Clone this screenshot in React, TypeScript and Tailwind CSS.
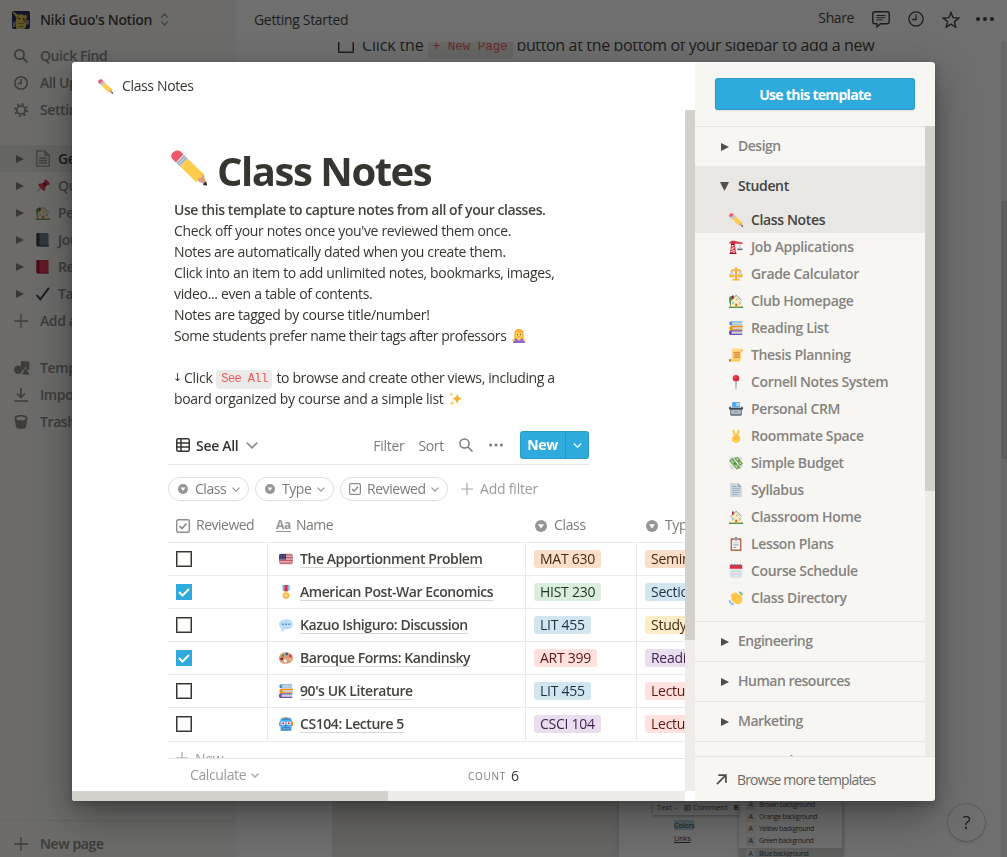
import type { ReactNode } from "react";

type IconProps = { className?: string };

function Svg({ box = 36, className = "size-[14px]", children }: { box?: number; className?: string; children: ReactNode }) {
  return (
    <svg viewBox={`0 0 ${box} ${box}`} className={`shrink-0 ${className}`}>
      {children}
    </svg>
  );
}

/* ---------- colour glyphs ---------- */

const Pencil = ({ className }: IconProps) => (
  <Svg className={className}>
    <path fill="#D99E82" d="M35.2 34.5c-.1-1.600-1.200-6.300-2.700-10.500-.6-1.600-3.600-2.500-6 .1-2.300 2.200-2.600 5.300-.7 6.500 2.800 1.600 7.600 3.600 9.400 3.900z" />
    <path fill="#EA596E" d="M1.500 9C-.3 7.200-.4 4.700 1.900 2.400S7.500-.2 9.300 1.300l3.300 3.300-7.700 7.800z" />
    <path fill="#FFCC4D" d="M32.500 24l-18-17.600-7.700 7.700 17.800 17.700c1.700-.1 3.100-.6 2.700-3.700 3 .2 3.500-1 5.200-4.100z" />
    <path fill="#292F33" d="M35.900 35.200c.3-.7-.3-2.700-.7-3.800-1.200.5-2.800 1.900-3.200 3 1.200.7 3.300 1.500 3.900.8z" />
    <path fill="#CCD6DD" d="M4.900 12.400l7.700-7.800 4.200 4.200-7.700 7.700z" />
    <path stroke="#99AAB5" strokeWidth="1.300" d="M6.300 13.700L13.900 6M8 15.400l7.700-7.700" />
  </Svg>
);

const Crane = () => (
  <Svg>
    <path fill="none" stroke="#DD2E44" strokeWidth="2.600" d="M4 34L7 8h6L17 34M6 28l9-7M7 20l7-6M5 34l10-6" />
    <path fill="#DD2E44" d="M1 6l8-5 26 6v3L12 9H1z" />
    <path fill="#A0041E" d="M2 33h17v3H2zM6 9h8v4H6z" />
    <path stroke="#99AAB5" strokeWidth="2" d="M28 9v13" />
    <path fill="#66757F" d="M21 22h14v4H21z" />
  </Svg>
);

const Scales = () => (
  <Svg>
    <path fill="#FFAC33" d="M15.500 3a2.500 2.500 0 015 0v2L32 8l-1 4-10-3v22h6v4H9v-4h6V9L5 12 4 8l11.500-3z" />
    <path fill="#9AAAB4" d="M7 9l6 13h-2L7 13 3 22H1zM29 9l6 13h-2l-4-9-4 9h-2z" />
    <path fill="#FFAC33" d="M0 20h14c0 5-3 7-7 7s-7-2-7-7zM22 20h14c0 5-3 7-7 7s-7-2-7-7z" />
  </Svg>
);

const House = ({ tree = true, className }: IconProps & { tree?: boolean }) => (
  <Svg className={className}>
    {tree && <path fill="#5C913B" d="M0 12C0 6 5 3 9 6c4 3 5 9 3 14l-4 12H4L1 22z" />}
    <path fill="#5C913B" d="M0 32h36v4H0z" />
    <path fill="#FFE8B6" d="M7 16l6-6 7-7 11 12v17H5V17z" />
    <path fill="#A0041E" d="M8 4h4v8H8z" />
    <path fill="none" stroke="#66757F" strokeWidth="2" d="M4 17L19 3l14 14" />
    <path fill="#C1694F" d="M16 25h5v7h-5z" />
    <path fill="#77BBEE" d="M8 20h4v5H8zM26 20h4v5h-4zM18 12h4v4h-4z" />
  </Svg>
);

const Books = () => (
  <Svg>
    <path fill="#3B88C3" d="M4 1h30v3H8v5h26v2H5C2 11 1 9 1 6s1-5 3-5z" />
    <path fill="#BFD3E0" d="M7 4h26v5H7zM8 16h27v5H8zM6 27h28v6H6z" />
    <path fill="#F4900C" d="M6 12h30v4H9v5h26v3H6c-3 0-5-3-5-6s2-6 5-6z" />
    <path fill="#744EAA" d="M4 24h30v3H7v6h27v3H4c-3 0-4-3-4-6s1-6 4-6z" />
  </Svg>
);

const Scroll = () => (
  <Svg>
    <path fill="#FFD983" d="M9 1h23c3 0 4 2 4 4s-2 4-4 4v21H7V5c0-2 0-4 2-4z" />
    <path fill="#FFCC4D" d="M3 29h25c-1 4 2 5 3 6H5c-3 0-5-1-5-3s1-3 3-3z" />
    <path fill="#C1694F" d="M12 11h16v2H12zM12 15h16v2H12zM12 19h16v2H12zM12 23h16v2H12zM1 29h4v6H3c-4 0-4-5-2-6z" />
    <path fill="#E39F3D" d="M28 5h8c0 3-2 4-4 4s-4-1-4-4zM12 9h16v16H12z" opacity=".5" />
  </Svg>
);

const Pin = () => (
  <Svg>
    <path fill="#99AAB5" d="M16 16h4l-.7 19a1.300 1.300 0 01-2.600 0z" />
    <circle cx="18" cy="8.500" r="8.500" fill="#DD2E44" />
    <circle cx="15" cy="5.500" r="2.200" fill="#EA596E" />
  </Svg>
);

const CardIndex = () => (
  <Svg>
    <path fill="#55ACEE" d="M8 0h20v14H8z" />
    <path fill="#BBDDF5" d="M19 2h7v8h-7z" />
    <path fill="#66757F" d="M0 13l5-2v5h26v-5l5 2v6l-3 2v13H3V21l-3-2z" />
    <path fill="#B4C1CA" d="M6 21h24v11H6z" />
    <path fill="#3A444B" d="M1 15h34v3H1zM5 33h26v2H5z" />
    <path fill="#8899A6" d="M13 24h10v4H13z" />
  </Svg>
);

const Victory = () => (
  <Svg>
    <path fill="#FFCB4C" d="M10 3c2-1 4 0 5 3l3 10 4-12c1-3 6-2 5.500 1L25 18c4 2 5 5 4 9-1 6-5 9-11 9S7 32 7 26c0-4 2-7 6-7L9 7c0-2 0-3 1-4z" />
    <path fill="none" stroke="#EF9645" strokeWidth="1.600" d="M10 22c3-2 7-2 8 1s-3 4-6 4M18 18l5 1c3 1 3 5 0 6" />
  </Svg>
);

const Money = () => (
  <Svg>
    <path fill="#CCD6DD" d="M0 8L10 1l14 6-6 7zM20 27l8-8 8 7-8 8z" />
    <path fill="#CCD6DD" d="M23 3l11 1v9l-8-4zM2 24l3 10 8-1-6-9z" />
    <path fill="#5C913B" d="M0 12l9-6 20 24-9 5zM14 5l8-3 14 18-8 5z" />
    <path fill="#A7D28B" d="M3 13l5-4 17 20-5 3zM17 6l4-2 12 15-5 3z" />
    <path fill="#3E721D" d="M11 17l5 1 1 6-4-2zM23 10l4 2 1 5-4-3z" />
  </Svg>
);

const Page = () => (
  <Svg>
    <path fill="#CCD6DD" d="M3 2c0-1 1-2 2-2h18l10 10v24c0 1-1 2-2 2H5c-1 0-2-1-2-2z" />
    <path fill="#99AAB5" d="M23 0l10 10H23zM8 8h11v2H8zM8 13h20v2H8zM8 18h20v2H8zM8 23h20v2H8zM8 28h14v2H8z" />
  </Svg>
);

const Clipboard = () => (
  <Svg>
    <rect x="4" y="3" width="28" height="33" rx="2" fill="#C1694F" />
    <path fill="#fff" d="M8 8h20v24H8z" />
    <path fill="#AAB8C2" d="M12 4h12v6H12z" />
    <path fill="#66757F" d="M16 0h4v5h-4z" />
    <path fill="#99AAB5" d="M11 14h14v2H11zM11 18h14v2H11zM11 22h14v2H11zM11 26h8v2h-8z" />
  </Svg>
);

const Calendar = () => (
  <Svg>
    <path fill="#E1E8ED" d="M2 8h32v25a3 3 0 01-3 3H5a3 3 0 01-3-3z" />
    <path fill="#DD2E44" d="M2 4a2 2 0 012-2h28a2 2 0 012 2v8H2z" />
    <path fill="#66757F" d="M6 0h3v5H6zM13 0h3v5h-3zM20 0h3v5h-3zM27 0h3v5h-3z" />
    <path stroke="#B8C5CE" strokeWidth="1" d="M2 19h32M2 26h32M10 12v24M18 12v24M26 12v24" />
  </Svg>
);

const Wave = () => (
  <Svg>
    <path fill="#FFCB4C" d="M6 10c0-4 4-5 7-3l1-3c2-2 5-1 6 1l5 5 2-5c2-3 5-1 5 2l2 13c2 8-3 14-10 14-6 0-12-3-17-10-2-3-2-5 1-6l-3-4c-1-2 0-4 1-4z" />
    <path fill="none" stroke="#EF9645" strokeWidth="1.100" d="M9 11l8 9M8 18l6 7M17 9l6 9" />
    <path fill="none" stroke="#5DADEC" strokeWidth="3.500" d="M25 3c4-1 9 3 9 8M2 24c-1 5 4 10 10 10" />
  </Svg>
);

const Flag = () => (
  <Svg>
    <rect x="0" y="5" width="36" height="26" rx="4" fill="#EEE" />
    <path stroke="#B22334" strokeWidth="2" d="M2 6h32M0 10h36M0 14h36M0 18h36M0 22h36M0 26h36M2 30h32" />
    <path fill="#3C3B6E" d="M4 5h14v14H0V9a4 4 0 014-4z" />
    <path stroke="#aab" strokeDasharray="1.500 2.500" d="M2 9h15M2 13h15M2 17h15" />
  </Svg>
);

const Medal = () => (
  <Svg>
    <path fill="#55ACEE" d="M9 0h18v13l-9 6-9-6z" />
    <path fill="#BBDDF5" d="M12 0h2v15h-2zM22 0h2v15h-2z" />
    <path fill="#DD2E44" d="M14 0h8v16l-4 3-4-3z" />
    <circle cx="18" cy="27" r="8.500" fill="#FFAC33" />
    <circle cx="18" cy="27" r="5" fill="#FFD983" />
    <path fill="#FFD983" d="M14 16h8v4h-8z" />
  </Svg>
);

const Bubble = () => (
  <Svg>
    <path fill="#BBDDF5" d="M18 3C8 3 0 8.500 0 16c0 4.500 3 8 7 10.500.5 3-1 6-3 8.500 5 0 9-2 11-6.200C27 30 36 24.500 36 16 36 8.500 28 3 18 3z" />
    <path fill="#3B88C3" d="M8 14h4v4H8zM16 14h4v4h-4zM24 14h4v4h-4z" />
  </Svg>
);

const Palette = () => (
  <Svg>
    <path fill="#D99E82" d="M18 3C8 3 0 9 0 18s6 15 16 15 20-5 20-15C36 9 28 3 18 3z" />
    <circle cx="10" cy="12" r="3.500" fill="#5C913B" />
    <circle cx="20" cy="8" r="3.500" fill="#226699" />
    <circle cx="29" cy="13" r="3.500" fill="#DD2E44" />
    <circle cx="7" cy="20" r="3.500" fill="#A0041E" />
    <circle cx="29" cy="22" r="3" fill="#FFCC4D" />
    <circle cx="16" cy="25" r="4" fill="#fff" />
  </Svg>
);

const Robot = () => (
  <Svg>
    <path fill="#F4900C" d="M0 12h4v12H0zM32 12h4v12h-4zM14 0h8v4h-8z" />
    <path fill="#55ACEE" d="M10 2h16c5 0 7 4 7 8v14l-1 4v8H4v-8l-1-4V10c0-4 2-8 7-8z" />
    <path fill="#3B88C3" d="M9 4h18v4H9z" />
    <path fill="#fff" d="M6 12h10v8H6zM20 12h10v8H20z" />
    <circle cx="11" cy="16" r="2.800" fill="#DD2E44" />
    <circle cx="25" cy="16" r="2.800" fill="#DD2E44" />
    <path fill="#226699" d="M15 21h6v3h-6zM8 27h20v5H8z" />
    <path fill="#CCD6DD" d="M11 28h3v3h-3zM16.500 28h3v3h-3zM22 28h3v3h-3z" />
  </Svg>
);

const Woman = () => (
  <Svg className="size-[14px]">
    <path fill="#FFAC33" d="M18 0c8 0 12 5 12 12v14H6V12C6 5 10 0 18 0z" />
    <path fill="#9266CC" d="M3 36v-5c0-4 3-6 7-6h16c4 0 7 2 7 6v5z" />
    <path fill="#FFDC5D" d="M14 20h8v7l-4 3-4-3zM0 27h7v4H0zM29 27h7v4h-7z" />
    <ellipse cx="18" cy="14" rx="8.500" ry="9.500" fill="#FFDC5D" />
    <path fill="#FFAC33" d="M9 13c0-7 5-8 9-8s9 2 9 8c-3-3-9-1-12-5-1 3-4 3-6 5z" />
    <path fill="#662113" d="M13 13h2v3h-2zM21 13h2v3h-2z" />
    <path stroke="#C1694F" strokeWidth="1.500" d="M15 20h6" />
  </Svg>
);

const Sparkles = () => (
  <Svg className="size-[14px]">
    <path fill="#FFAC33" d="M21 3c2 10 5 12 15 14-10 2-13 5-15 15-2-10-5-13-15-15C16 15 19 13 21 3z" />
    <path fill="#FFCC4D" d="M6 0c1 4 2 5 6 6-4 1-5 2-6 6-1-4-2-5-6-6 4-1 5-2 6-6zM8 22c1 4.500 2 5.500 7 7-5 1-6 2-7 7-1-5-2-6-7-7 5-1.500 6-2.500 7-7z" />
  </Svg>
);

const Pushpin = () => (
  <Svg>
    <path stroke="#99AAB5" strokeWidth="2.500" d="M2 34l12-13" />
    <path fill="#DD2E44" d="M22 1c3-2 16 10 13 13-1 2-4 2-6 1l-5 6c1 5 0 8-2 10C19 32 5 18 6 14c1-2 5-3 10-2l6-5c-1-2-1-5 0-6z" />
    <path fill="#A0041E" d="M22 7l7 7-5 6-8-8z" />
  </Svg>
);

const Book = ({ color, spine }: { color: string; spine: string }) => (
  <Svg>
    <path fill="#CCD6DD" d="M6 2h28v32H6z" />
    <rect x="2" y="0" width="30" height="34" rx="3" fill={color} />
    <path fill={spine} d="M4 0h5v34H4a3 3 0 01-3-3V3a3 3 0 013-3zM2 32h31v3H4z" />
  </Svg>
);

const CheckGlyph = () => (
  <Svg>
    <path fill="none" stroke="#31373D" strokeWidth="5" strokeLinecap="round" strokeLinejoin="round" d="M3 22l8 10L32 4" />
  </Svg>
);

const PikachuAvatar = () => (
  <Svg className="size-[18px] rounded-[2px]">
    <path fill="#1a1a50" d="M0 0h36v36H0z" />
    <path fill="#d9bd48" d="M3 0l10 8c4-2 8-2 11 1l9-3-5 10c2 7 1 14-3 20H9C6 28 6 21 9 14L2 3z" />
    <path fill="#101018" d="M2 0h6l2 6zM35 4l-6 8 0-5zM13 14h3v3h-3zM22 14h3v3h-3z" />
    <circle cx="25" cy="20" r="2.600" fill="#d04030" />
    <path fill="#8a7430" d="M12 24h12v2H12zM14 30h9v2h-9zM8 12l4-2v5z" />
    <path fill="#8f8f88" d="M29 18h5v9h-5zM2 22h4v10H2z" />
  </Svg>
);

/* ---------- line icons ---------- */

const Caret = ({ className = "" }: IconProps) => (
  <svg viewBox="0 0 10 6" className={`shrink-0 ${className}`} fill="none" stroke="currentColor" strokeWidth="1.400">
    <path d="M.6.6L5 5 9.400.6" />
  </svg>
);

const Plus = ({ className = "" }: IconProps) => (
  <svg viewBox="0 0 14 14" className={`shrink-0 ${className}`} stroke="currentColor" strokeWidth="1.300">
    <path d="M7 0v14M0 7h14" />
  </svg>
);

const Search = ({ className = "" }: IconProps) => (
  <svg viewBox="0 0 14 14" className={`shrink-0 ${className}`} fill="none" stroke="currentColor">
    <circle cx="5.500" cy="5.500" r="4.600" />
    <path d="M9 9l4.500 4.500" />
  </svg>
);

const Clock = ({ className = "" }: IconProps) => (
  <svg viewBox="0 0 16 16" className={`shrink-0 ${className}`} fill="none" stroke="currentColor">
    <circle cx="8" cy="8" r="7.100" />
    <path d="M8 3.500v5H4.200" />
  </svg>
);

const Dots = ({ className = "" }: IconProps) => (
  <svg viewBox="0 0 18 4" className={`shrink-0 ${className}`} fill="currentColor">
    <circle cx="2" cy="2" r="2" />
    <circle cx="9" cy="2" r="2" />
    <circle cx="16" cy="2" r="2" />
  </svg>
);

const Triangle = ({ className = "" }: IconProps) => (
  <svg viewBox="0 0 8 8" className={`shrink-0 ${className}`} fill="currentColor">
    <path d="M0 0L8 4 0 8z" />
  </svg>
);

const SelectIcon = ({ className = "" }: IconProps) => (
  <svg viewBox="0 0 12 12" className={`shrink-0 ${className}`}>
    <circle cx="6" cy="6" r="6" fill="#979592" />
    <path d="M3 4.300h6L6 8.400z" fill="#fff" />
  </svg>
);

const CheckIcon = ({ className = "" }: IconProps) => (
  <svg viewBox="0 0 14 14" className={`shrink-0 ${className}`} fill="none" stroke="#8f8d8a">
    <rect x=".7" y=".7" width="12.600" height="12.600" rx="1.500" strokeWidth="1.400" />
    <path d="M3.500 7.200l2.500 2.300 4.500-5" strokeWidth="1.800" />
  </svg>
);

/* ---------- page behind the dialog ---------- */

function NavRow({ icon, label }: { icon: ReactNode; label: string }) {
  return (
    <div className="flex h-[27px] items-center pl-[14px]">
      <span className="flex w-[26px]">{icon}</span>
      <span className="pb-px">{label}</span>
    </div>
  );
}

function PageRow({ icon, label, active = false }: { icon: ReactNode; label: string; active?: boolean }) {
  return (
    <div className={`flex h-[27px] items-center pl-4 ${active ? "bg-[#e6e5e2] text-[#37352f]" : ""}`}>
      <Triangle className="mr-[12px] size-[8px] text-[#787774]" />
      <span className="flex w-[22px]">{icon}</span>
      <span className="pb-px">{label}</span>
    </div>
  );
}

function Sidebar() {
  return (
    <aside className="flex w-[236px] shrink-0 flex-col bg-[#f7f6f3] text-[14px] font-semibold tracking-[-0.4px] text-[#82817d]">
      <div className="flex h-[39px] items-center pl-3 text-[#37352f]">
        <PikachuAvatar />
        <span className="ml-[10px] font-semibold tracking-[-0.370px]">Niki Guo's Notion</span>
        <svg viewBox="0 0 8 13" className="ml-[8px] h-[13px] w-[9px]" fill="none" stroke="#8b8a86" strokeWidth="1.300">
          <path d="M.6 4.600L4 1l3.400 3.600M.6 8.400L4 12l3.400-3.600" />
        </svg>
      </div>
      <div className="mt-[3px]">
        <NavRow icon={<Search className="size-[14px] stroke-[1.800]" />} label="Quick Find" />
        <NavRow icon={<Clock className="size-[14px] stroke-[1.800]" />} label="All Updates" />
        <NavRow
          icon={
            <svg viewBox="0 0 14 14" className="size-[14px]" fill="none" stroke="currentColor">
              <circle cx="7" cy="7" r="4.200" strokeWidth="1.800" />
              <circle cx="7" cy="7" r="6" strokeWidth="2" strokeDasharray="2 2.710" />
            </svg>
          }
          label="Settings & Members"
        />
      </div>
      <div className="mt-[22px]">
        <PageRow
          active
          icon={
            <svg viewBox="0 0 14 17" className="-my-1 h-[17px] w-[14px]" fill="none" stroke="#8b8a86" strokeWidth="1.300">
              <path d="M.8.8h8l4.400 4.400v11H.800zM8.800.8v4.400h4.400M3 8h8M3 10.500h8M3 13h8" />
            </svg>
          }
          label="Getting Started"
        />
        <PageRow icon={<Pushpin />} label="Quick Note" />
        <PageRow icon={<House />} label="Personal Home" />
        <PageRow icon={<Book color="#66757F" spine="#292F33" />} label="Journal" />
        <PageRow icon={<Book color="#DD2E44" spine="#A0041E" />} label="Reading List" />
        <PageRow icon={<CheckGlyph />} label="Task List" />
        <NavRow icon={<Plus className="size-[14px]" />} label="Add a page" />
      </div>
      <div className="mt-[20px]">
        <NavRow
          icon={
            <svg viewBox="0 0 16 14" className="h-[14px] w-[16px]" fill="currentColor">
              <circle cx="4.200" cy="8.800" r="4.200" />
              <path d="M7 0l8.500.500-.5 9-8.500-1z" />
              <path d="M11.500 6l4.500 8H7.500z" stroke="#f7f6f3" strokeWidth=".7" />
            </svg>
          }
          label="Templates"
        />
        <NavRow
          icon={
            <svg viewBox="0 0 14 14" className="size-[14px]" fill="none" stroke="currentColor" strokeWidth="1.700">
              <path d="M7 0v9M3 5.500L7 9.500l4-4M0 13h14" />
            </svg>
          }
          label="Import"
        />
        <NavRow
          icon={
            <svg viewBox="0 0 14 14" className="size-[14px]" fill="currentColor">
              <path d="M.5 3C.5 1 3 0 7 0s6.500 1 6.500 3L12 12c-.3 1.300-2 2-5 2s-4.700-.7-5-2z" />
              <ellipse cx="7" cy="3.400" rx="4.600" ry="1.900" fill="#f7f6f3" />
            </svg>
          }
          label="Trash"
        />
      </div>
      <div className="mt-auto flex h-[37px] items-center border-t border-[#e6e5e2] pt-[10px]">
        <NavRow icon={<Plus className="size-[14px]" />} label="New page" />
      </div>
    </aside>
  );
}

const swatches = [
  { name: "Brown", tone: "bg-[#e9e5e3]" },
  { name: "Orange", tone: "bg-[#faebdd]" },
  { name: "Yellow", tone: "bg-[#fbf3db]" },
  { name: "Green", tone: "bg-[#ddedea]" },
  { name: "Blue", tone: "bg-[#ddebf1]" },
];

function BackgroundDoc() {
  return (
    <main className="flex min-w-0 flex-1 flex-col bg-white text-[#37352f]">
      <header className="flex h-[42px] shrink-0 items-center pl-[18px] pr-[13px] text-[14px]">
        <span className="-mt-1 tracking-[-0.32px]">Getting Started</span>
        <div className="-mt-1 ml-auto flex items-center">
          <span className="-mt-[3px] mr-[18px] tracking-[-0.4px]">Share</span>
          <svg viewBox="0 0 18 17" className="mr-[18px] h-[17px] w-[18px]" fill="none" stroke="currentColor" strokeWidth="1.400">
            <path d="M3 .8h12c1.500 0 2.200.7 2.200 2.200v7.500c0 1.500-.7 2.200-2.200 2.200H8.500L5 16v-3.300H3C1.500 12.700.8 12 .8 10.500V3C.8 1.500 1.500.8 3 .8z" />
            <path strokeWidth="1" d="M4.500 4.500h9M4.500 6.700h9M4.500 8.900h6" />
          </svg>
          <Clock className="mr-[18px] size-[16px] stroke-[1.300]" />
          <svg viewBox="0 0 18 17" className="mr-[16px] h-[17px] w-[18px]" fill="none" stroke="currentColor" strokeWidth="1.400">
            <path d="M9 1.500l2.100 5.200 5.600.4-4.300 3.600 1.400 5.500L9 13.200l-4.800 3 1.400-5.500L1.300 7.100l5.600-.4z" />
          </svg>
          <Dots className="h-[4px] w-[18px]" />
        </div>
      </header>
      <div className="flex min-h-0 flex-1 overflow-hidden">
        <div className="flex min-w-0 flex-1 flex-col overflow-hidden">
          <div className="-mt-[9px] flex h-[24px] shrink-0 items-center pl-[102px] text-[16px]">
            <span className="mr-[8px] size-[16px] border border-[#37352f] shadow-[inset_0_0_0_1px_rgba(55,53,47,0.500)]" />
            <span className="whitespace-pre tracking-[-0.14px]">Click the </span>
            <span className="mt-[4px] flex h-[24px] items-center whitespace-pre rounded-[3px] bg-[#ebeae8] px-[5px] font-['Liberation_Mono'] text-[12.500px] text-[#eb5757]">
              + New Page
            </span>
            <span className="whitespace-pre tracking-[-0.350px]"> button at the bottom of your sidebar to add a new</span>
          </div>
          <div className="ml-[96px] mt-auto flex h-[56px] w-[510px] shrink-0 bg-[#e9e7e2] text-[7.500px] font-medium">
            <div className="ml-[287px] flex h-full w-[223px] bg-white shadow-[0_0_6px_rgba(0,0,0,0.200)]">
              <div className="flex w-[120px] flex-col">
                <div className="ml-[34px] flex h-[14px] w-[86px] shrink-0 items-center gap-[6px] whitespace-nowrap bg-white pl-[4px] shadow-[0_1px_3px_rgba(0,0,0,0.400)]">
                  <span>Text</span>
                  <Caret className="-ml-[4px] h-[3px] w-[4px]" />
                  <span className="flex items-center gap-[2px]">
                    <svg viewBox="0 0 18 17" className="size-[7px]" fill="none" stroke="currentColor" strokeWidth="2">
                      <path d="M2 1h14v11H9l-4 4v-4H2zM5 5h8M5 8h6" />
                    </svg>
                    Comment
                  </span>
                  <span className="font-bold">B</span>
                </div>
                <span className="ml-[55px] mt-[5px] w-fit bg-[#b5d5e5] leading-[10px] tracking-[-0.3px]">Colors</span>
                <span className="ml-[55px] mt-[4px] w-fit leading-[9px] tracking-[-0.3px] underline">Links</span>
              </div>
              <div className="flex flex-1 flex-col shadow-[0_0_4px_rgba(0,0,0,0.300)]">
                {swatches.map((s) => (
                  <div key={s.name} className={`flex h-[12.200px] shrink-0 items-center whitespace-nowrap pl-[7px] text-[7px] tracking-[-0.400px] ${s.name === "Brown" ? "-mt-[2px]" : ""} ${s.name === "Blue" ? "bg-[#d5d4d2]" : ""}`}>
                    <span className={`mr-[4px] flex size-[9px] items-center justify-center ${s.tone}`}>A</span>
                    <span>{s.name} background</span>
                  </div>
                ))}
              </div>
            </div>
          </div>
        </div>
        <div className="w-[6px] bg-[#edece9] pt-[159px]">
          <div className="h-[258px] bg-[#d3d1cb]" />
        </div>
      </div>
    </main>
  );
}

/* ---------- dialog ---------- */

const rows = [
  { done: false, icon: <Flag />, name: "The Apportionment Problem", cls: "MAT 630", ct: "bg-[#fadec9] text-[#49290e]", type: "Seminar", tt: "bg-[#fadec9] text-[#49290e]" },
  { done: true, icon: <Medal />, name: "American Post-War Economics", cls: "HIST 230", ct: "bg-[#dbeddb] text-[#1c3829]", type: "Section", tt: "bg-[#d3e5ef] text-[#183347]" },
  { done: false, icon: <Bubble />, name: "Kazuo Ishiguro: Discussion", cls: "LIT 455", ct: "bg-[#d3e5ef] text-[#183347]", type: "Study Group", tt: "bg-[#fdecc8] text-[#402c1b]" },
  { done: true, icon: <Palette />, name: "Baroque Forms: Kandinsky", cls: "ART 399", ct: "bg-[#ffe2dd] text-[#5d1715]", type: "Reading", tt: "bg-[#e8deee] text-[#412454]" },
  { done: false, icon: <Books />, name: "90's UK Literature", cls: "LIT 455", ct: "bg-[#d3e5ef] text-[#183347]", type: "Lecture", tt: "bg-[#ffe2dd] text-[#5d1715]" },
  { done: false, icon: <Robot />, name: "CS104: Lecture 5", cls: "CSCI 104", ct: "bg-[#e8deee] text-[#412454]", type: "Lecture", tt: "bg-[#ffe2dd] text-[#5d1715]" },
];

function Tag({ tone, children }: { tone: string; children: ReactNode }) {
  return <span className={`flex h-[18px] items-center whitespace-nowrap rounded-[3px] px-[6px] pb-[2px] text-[14px] tracking-[-0.27px] ${tone}`}>{children}</span>;
}

function Chip({ icon, label, className }: { icon: ReactNode; label: string; className: string }) {
  return (
    <div className={`flex h-[24px] shrink-0 items-center rounded-full border border-[#deddda] text-[14px] tracking-[-0.45px] text-[#7d7b77] ${className}`}>
      {icon}
      <span className="pb-px">{label}</span>
      <Caret className="ml-auto h-[5px] w-[8px] text-[#979592]" />
    </div>
  );
}

function NotesTable() {
  return (
    <div className="ml-[96px] mt-[8px] flex w-[600px] flex-col text-[14px]">
      <div className="flex h-[34px] shrink-0 items-center border-b border-[#e9e9e7] tracking-[-0.5px] text-[#7d7b77]">
        <div className="flex w-[100px] items-center pl-2">
          <CheckIcon className="mr-[6px] size-[14px]" />
          <span className="pb-[2px]">Reviewed</span>
        </div>
        <div className="flex w-[258px] items-center pl-2">
          <span className="mr-[5px] border-b border-[#979592] text-[12px] font-bold leading-[12px] tracking-[-0.3px] text-[#979592]">Aa</span>
          <span className="pb-[2px]">Name</span>
        </div>
        <div className="flex w-[111px] items-center pl-[9px] tracking-[-0.35px]">
          <SelectIcon className="mr-[7px] size-[12px]" />
          <span className="pb-[2px]">Class</span>
        </div>
        <div className="flex items-center pl-[9px] tracking-[-0.35px]">
          <SelectIcon className="mr-[7px] size-[12px]" />
          <span className="pb-[2px]">Type</span>
        </div>
      </div>
      {rows.map((r, i) => (
        <div key={r.name} className={`flex shrink-0 border-b border-[#e9e9e7] ${i === 5 ? "h-[34px] pb-px" : "h-[33px]"}`}>
          <div className="flex w-[100px] items-center border-r border-[#e9e9e7] pl-2">
            {r.done ? (
              <span className="flex size-4 items-center justify-center bg-[#2eaadc]">
                <svg viewBox="0 0 12 9" className="h-[9px] w-[12px]" fill="none" stroke="#fff" strokeWidth="2">
                  <path d="M1 4l3.500 3.500L11 1" />
                </svg>
              </span>
            ) : (
              <span className="size-4 border border-[#37352f] shadow-[inset_0_0_0_1px_rgba(55,53,47,0.500)]" />
            )}
          </div>
          <div className="flex w-[258px] items-center border-r border-[#e9e9e7] pl-[11px]">
            {r.icon}
            <span className="ml-[7px] whitespace-nowrap border-b border-[#d9d8d5] font-semibold leading-[17px] tracking-[-0.440px] text-[#45433e]">{r.name}</span>
          </div>
          <div className="flex w-[111px] items-center border-r border-[#e9e9e7] pl-2">
            <Tag tone={r.ct}>{r.cls}</Tag>
          </div>
          <div className="flex items-center pl-2">
            <Tag tone={r.tt}>{r.type}</Tag>
          </div>
        </div>
      ))}
      <div className="flex h-[32px] shrink-0 items-center pl-2 tracking-[-0.3px] text-[#9b9a97]">
        <Plus className="mr-[7px] size-[12px]" />
        New
      </div>
    </div>
  );
}

function Preview() {
  return (
    <section className="flex w-[623px] shrink-0 flex-col bg-white text-[#37352f]">
      <div className="flex h-[48px] shrink-0 items-center pl-[26px] text-[14px]">
        <Pencil className="size-[15px]" />
        <span className="ml-[9px] pb-px tracking-[-0.360px]">Class Notes</span>
      </div>
      <div className="flex h-[681px] shrink-0">
        <div className="flex w-[613px] flex-col overflow-hidden">
          <div className="flex h-[648px] shrink-0 flex-col overflow-hidden">
            <div className="mt-[37px] flex h-[48px] shrink-0 items-center pl-[99px]">
              <Pencil className="-mt-[6px] size-[36px]" />
              <h1 className="ml-[10px] whitespace-nowrap pb-px text-[40px] font-bold leading-[48px] tracking-[-1.450px]">Class Notes</h1>
            </div>
            <div className="mt-[4px] flex shrink-0 flex-col whitespace-nowrap pl-[102px] text-[14px] leading-[21px] tracking-[-0.345px]">
              <p className="font-semibold tracking-[-0.430px] text-[#45433e]">Use this template to capture notes from all of your classes.</p>
              <p>Check off your notes once you've reviewed them once.</p>
              <p className="tracking-[-0.350px]">Notes are automatically dated when you create them.</p>
              <p>Click into an item to add unlimited notes, bookmarks, images,</p>
              <p>video... even a table of contents.</p>
              <p className="tracking-[-0.310px]">Notes are tagged by course title/number!</p>
              <p className="flex items-center tracking-[-0.430px]">
                Some students prefer name their tags after professors <span className="ml-[6px]"><Woman /></span>
              </p>
              <p className="mt-[21px] flex h-[21px] items-center tracking-[-0.300px]">
                <span className="-ml-px w-[9px] font-['DejaVu_Sans'] text-[11px]">↓</span>
                <span className="ml-[2px]">Click</span>
                <span className="ml-[4px] mr-[4px] mt-[3px] flex h-[19px] w-[56px] items-center justify-center rounded-[3px] bg-[#ebebea] font-['Liberation_Mono'] text-[12px] tracking-[-0.600px] text-[#eb5757]">See All</span>
                <span className="tracking-[-0.370px]">to browse and create other views, including a</span>
              </p>
              <p className="flex items-center tracking-[-0.320px]">
                board organized by course and a simple list <span className="ml-[5px]"><Sparkles /></span>
              </p>
            </div>
            <div className="ml-[96px] mt-[22px] flex h-[34px] w-[421px] shrink-0 items-center border-b border-[#e6e6e4] pb-[5px] pl-2 text-[14px]">
              <svg viewBox="0 0 14 14" className="size-[14px]" fill="none" stroke="currentColor" strokeWidth="1.500">
                <rect x=".75" y=".75" width="12.500" height="12.500" rx="1.500" />
                <path d="M.8 5h12.400M.8 9h12.400M5 .8v12.400" />
              </svg>
              <span className="ml-[6px] font-semibold tracking-[-0.300px]">See All</span>
              <Caret className="ml-[8px] h-[7px] w-[12px] text-[#8b8a86]" />
              <div className="ml-auto flex items-center text-[#7d7b77]">
                <span className="tracking-[-0.300px]">Filter</span>
                <span className="ml-[14px] tracking-[-0.300px]">Sort</span>
                <Search className="ml-[15px] size-[14px] stroke-[1.500]" />
                <Dots className="ml-[16px] mr-[17px] h-[4px] w-[14px]" />
                <div className="flex h-[28px] w-[69px] overflow-hidden rounded-[3px] bg-[#2eaadc] font-bold text-white shadow-[inset_0_0_0_1px_rgba(15,15,15,0.100)]">
                  <span className="flex w-[45px] items-center justify-center pb-px tracking-[-0.400px]">New</span>
                  <span className="flex flex-1 items-center justify-center border-l border-[#2794c0]">
                    <Caret className="h-[5px] w-[9px]" />
                  </span>
                </div>
              </div>
            </div>
            <div className="ml-[96px] mt-[12px] flex shrink-0 items-center">
              <Chip className="w-[81px] pl-[9px] pr-[8px]" icon={<SelectIcon className="mr-[7px] size-[10px]" />} label="Class" />
              <Chip className="ml-[6px] w-[79px] pl-[9px] pr-[8px]" icon={<SelectIcon className="mr-[7px] size-[10px]" />} label="Type" />
              <Chip className="ml-[6px] w-[108px] pl-[8px] pr-[8px]" icon={<CheckIcon className="mr-[6px] size-[12px]" />} label="Reviewed" />
              <Plus className="ml-[13px] size-[12px] text-[#a5a4a1]" />
              <span className="ml-[7px] pb-px text-[14px] tracking-[-0.200px] text-[#9b9a97]">Add filter</span>
            </div>
            <NotesTable />
          </div>
          <div className="ml-[96px] flex h-[33px] shrink-0 items-center border-t border-[#e6e6e4] pl-[22px] text-[14px] text-[#9b9a97]">
            <span className="pb-px tracking-[-0.380px]">Calculate</span>
            <Caret className="ml-[5px] h-[5px] w-[8px] stroke-2 text-[#b5b4b1]" />
            <span className="ml-auto mr-[5px] mt-[2px] text-[10px] tracking-[0.700px] text-[#7d7b77]">COUNT</span>
            <span className="mr-[166px] text-[#37352f]">6</span>
          </div>
        </div>
        <div className="w-[10px] bg-[#edece9]">
          <div className="h-[530px] bg-[#d3d1cb]" />
        </div>
      </div>
      <div className="h-[10px] w-[613px] bg-[#edece9]">
        <div className="h-full w-[316px] bg-[#d3d1cb]" />
      </div>
    </section>
  );
}

const templates = [
  { icon: <Crane />, name: "Job Applications" },
  { icon: <Scales />, name: "Grade Calculator" },
  { icon: <House />, name: "Club Homepage" },
  { icon: <Books />, name: "Reading List" },
  { icon: <Scroll />, name: "Thesis Planning" },
  { icon: <Pin />, name: "Cornell Notes System" },
  { icon: <CardIndex />, name: "Personal CRM" },
  { icon: <Victory />, name: "Roommate Space" },
  { icon: <Money />, name: "Simple Budget" },
  { icon: <Page />, name: "Syllabus" },
  { icon: <House tree={false} />, name: "Classroom Home" },
  { icon: <Clipboard />, name: "Lesson Plans" },
  { icon: <Calendar />, name: "Course Schedule" },
  { icon: <Wave />, name: "Class Directory" },
];

function TemplateRow({ icon, name }: { icon: ReactNode; name: string }) {
  return (
    <div className="flex h-[27px] shrink-0 items-center pl-[34px]">
      {icon}
      <span className="ml-[8px]">{name}</span>
    </div>
  );
}

function Category({ name }: { name: string }) {
  return (
    <div className="flex h-[40px] shrink-0 items-center border-t border-[#e6e5e2] pl-[26px] tracking-[-0.5px]">
      <Triangle className="mr-[9px] size-[8px] text-[#4f4d48]" />
      <span className="pb-[2px]">{name}</span>
    </div>
  );
}

function TemplatePicker() {
  return (
    <section className="flex w-[240px] shrink-0 flex-col bg-[#f7f6f3] text-[14px] font-semibold tracking-[-0.360px] text-[#85837f]">
      <div className="flex h-[64px] shrink-0 items-center justify-center">
        <button className="h-[32px] w-[200px] rounded-[3px] bg-[#2eaadc] font-bold tracking-[-0.700px] text-white shadow-[inset_0_0_0_1px_rgba(15,15,15,0.100),0_1px_2px_rgba(15,15,15,0.100)]">
          Use this template
        </button>
      </div>
      <div className="flex h-[630px] shrink-0">
        <div className="flex w-[230px] flex-col overflow-hidden">
          <Category name="Design" />
          <div className="flex h-[67px] shrink-0 flex-col bg-[#e8e7e4] text-[#45433e]">
            <div className="flex h-[40px] items-center pl-[25px]">
              <Triangle className="mr-[9px] size-[9px] rotate-90 text-[#4f4d48]" />
              <span className="pb-px">Student</span>
            </div>
            <TemplateRow icon={<Pencil />} name="Class Notes" />
          </div>
          <div className="flex shrink-0 flex-col pb-[10px]">
            {templates.map((t) => (
              <TemplateRow key={t.name} {...t} />
            ))}
          </div>
          <Category name="Engineering" />
          <Category name="Human resources" />
          <Category name="Marketing" />
          <Category name="Personal" />
        </div>
        <div className="w-[10px] bg-[#edece9]">
          <div className="h-[365px] bg-[#d3d1cb]" />
        </div>
      </div>
      <div className="flex flex-1 items-center border-t border-[#e6e5e2] pl-[21px] font-medium text-[#6f6d69]">
        <svg viewBox="0 0 12 12" className="mr-[10px] size-[11px]" fill="none" stroke="#4f4d48" strokeWidth="1.900">
          <path d="M1 11L10.500 1.500M2.500 1.200h8.300v8.300" />
        </svg>
        <span className="tracking-[-0.840px]">Browse more templates</span>
      </div>
    </section>
  );
}

export default function App() {
  return (
    <div className="h-[857px] w-[1007px] overflow-hidden font-['Open_Sans',sans-serif]">
      <div className="flex h-full">
        <Sidebar />
        <BackgroundDoc />
      </div>
      <div className="fixed left-[948px] top-[804px] flex size-[37px] items-center justify-center rounded-full bg-white text-[19px] text-[#37352f] shadow-[0_0_0_1px_rgba(15,15,15,0.150),0_2px_4px_rgba(15,15,15,0.150)]">
        ?
      </div>
      <div className="fixed inset-0 bg-[rgba(15,15,15,0.600)] pl-[72px] pt-[62px]">
        <div className="flex h-[739px] w-[863px] overflow-hidden rounded-[3px] shadow-[0_0_0_1px_rgba(15,15,15,0.050),0_5px_10px_rgba(15,15,15,0.200),0_15px_40px_rgba(15,15,15,0.400)]">
          <Preview />
          <TemplatePicker />
        </div>
      </div>
    </div>
  );
}
